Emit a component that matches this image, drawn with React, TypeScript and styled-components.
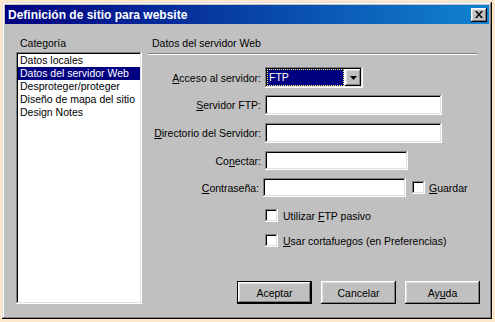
import styled, { createGlobalStyle, css } from "styled-components";

const GlobalStyle = createGlobalStyle`
  html, body {
    margin: 0;
    padding: 0;
    background: #fde8cb;
  }
  body {
    font-family: "Liberation Sans", Arial, sans-serif;
    font-size: 10.5px;
    color: #000;
  }
`;

const raised = css`
  box-shadow: inset -1px -1px #000, inset 1px 1px #fff, inset -2px -2px #808080,
    inset 2px 2px #dfdfdf;
`;

const sunken = css`
  box-shadow: inset -1px -1px #fff, inset 1px 1px #808080, inset -2px -2px #dfdfdf,
    inset 2px 2px #000;
`;

const Page = styled.div`
  padding: 2px;
`;

const Window = styled.div`
  width: 490px;
  height: 317px;
  box-sizing: border-box;
  padding: 3px;
  background: #c0c0c0;
  display: flex;
  flex-direction: column;
  box-shadow: inset -1px -1px #000, inset 1px 1px #dfdfdf, inset -2px -2px #808080,
    inset 2px 2px #fff;
`;

const TitleBar = styled.div`
  height: 19px;
  display: flex;
  align-items: center;
  justify-content: space-between;
  padding: 0 2px 0 3px;
  background: linear-gradient(to right, #000080, #1084d0);
  color: #fff;
  font-weight: bold;
  font-size: 12px;
`;

const CloseButton = styled.div`
  width: 16px;
  height: 14px;
  background: #c0c0c0;
  display: flex;
  align-items: center;
  justify-content: center;
  ${raised};
`;

const Body = styled.div`
  flex: 1;
  display: flex;
  padding: 13px 9px 12px 11px;
  min-height: 0;
`;

const LeftColumn = styled.div`
  width: 126px;
  margin-right: 6px;
  display: flex;
  flex-direction: column;
`;

const Caption = styled.div`
  line-height: 13px;
  height: 13px;
  padding-left: 4px;
`;

const ListBox = styled.div`
  flex: 1;
  margin-top: 2px;
  background: #fff;
  padding: 2px;
  ${sunken};
`;

const ListItem = styled.div<{ selected?: boolean }>`
  line-height: 13px;
  height: 13px;
  padding-left: 2px;
  white-space: nowrap;
  background: ${({ selected }) => (selected ? "#000080" : "transparent")};
  color: ${({ selected }) => (selected ? "#fff" : "#000")};
`;

const RightPanel = styled.div`
  flex: 1;
  display: flex;
  flex-direction: column;
`;

const Separator = styled.div`
  margin: 3px 3px 0 0;
  border-top: 1px solid #808080;
  border-bottom: 1px solid #fff;
`;

const Form = styled.div`
  display: flex;
  flex-direction: column;
  margin-top: 12px;
`;

const Row = styled.div<{ mt: number; h: number }>`
  display: flex;
  align-items: center;
  margin-top: ${({ mt }) => mt}px;
  height: ${({ h }) => h}px;
`;

const Label = styled.label<{ w?: number }>`
  width: ${({ w }) => w ?? 113}px;
  margin-right: 4px;
  text-align: right;
  white-space: nowrap;
`;

const Key = styled.span`
  text-decoration: underline;
`;

const TextField = styled.div<{ w: number }>`
  width: ${({ w }) => w}px;
  height: 100%;
  background: #fff;
  ${sunken};
`;

const Select = styled.div`
  width: 98px;
  height: 100%;
  box-sizing: border-box;
  padding: 2px;
  display: flex;
  background: #fff;
  ${sunken};
`;

const SelectValue = styled.div`
  flex: 1;
  margin-right: 1px;
  background: #000080;
  color: #fff;
  border: 1px dotted #ffff80;
  line-height: 15px;
  padding-left: 1px;
`;

const DropButton = styled.div`
  width: 16px;
  background: #c0c0c0;
  display: flex;
  align-items: center;
  justify-content: center;
  ${raised};
`;

const CheckBox = styled.div`
  width: 13px;
  height: 13px;
  flex: none;
  background: #fff;
  ${sunken};
`;

const CheckText = styled.span<{ ml: number }>`
  margin-left: ${({ ml }) => ml}px;
  white-space: nowrap;
`;

const Spacer = styled.div<{ w: number }>`
  width: ${({ w }) => w}px;
  flex: none;
`;

const ButtonRow = styled.div`
  margin-top: auto;
  display: flex;
  justify-content: flex-end;
  gap: 9px;
`;

const Button = styled.button<{ isDefault?: boolean }>`
  width: 75px;
  height: 23px;
  border: none;
  padding: 0;
  background: #c0c0c0;
  font-family: inherit;
  font-size: 10.5px;
  color: #000;
  ${({ isDefault }) =>
    isDefault
      ? css`
          box-shadow: inset 0 0 0 1px #000, inset -2px -2px #000, inset 2px 2px #fff,
            inset -3px -3px #808080, inset 3px 3px #dfdfdf;
        `
      : raised};
`;

const CloseIcon = () => (
  <svg width="8" height="7" viewBox="0 0 8 7">
    <path d="M0 0h2l2 2.5L6 0h2L5 3.5 8 7H6L4 4.5 2 7H0l3-3.5z" fill="#000" />
  </svg>
);

const ArrowIcon = () => (
  <svg width="7" height="4" viewBox="0 0 7 4">
    <path d="M0 0h7L3.5 4z" fill="#000" />
  </svg>
);

const categories = [
  "Datos locales",
  "Datos del servidor Web",
  "Desproteger/proteger",
  "Diseño de mapa del sitio",
  "Design Notes",
];

export default function App() {
  return (
    <>
      <GlobalStyle />
      <Page>
        <Window>
          <TitleBar>
            <span>Definición de sitio para website</span>
            <CloseButton>
              <CloseIcon />
            </CloseButton>
          </TitleBar>
          <Body>
            <LeftColumn>
              <Caption>Categoría</Caption>
              <ListBox>
                {categories.map((c) => (
                  <ListItem key={c} selected={c === "Datos del servidor Web"}>
                    {c}
                  </ListItem>
                ))}
              </ListBox>
            </LeftColumn>
            <RightPanel>
              <Caption>Datos del servidor Web</Caption>
              <Separator />
              <Form>
                <Row mt={0} h={21}>
                  <Label>
                    <Key>A</Key>cceso al servidor:
                  </Label>
                  <Select>
                    <SelectValue>FTP</SelectValue>
                    <DropButton>
                      <ArrowIcon />
                    </DropButton>
                  </Select>
                </Row>
                <Row mt={7} h={20}>
                  <Label>
                    <Key>S</Key>ervidor FTP:
                  </Label>
                  <TextField w={177} />
                </Row>
                <Row mt={8} h={20}>
                  <Label>
                    <Key>D</Key>irectorio del Servidor:
                  </Label>
                  <TextField w={177} />
                </Row>
                <Row mt={8} h={19}>
                  <Label>
                    Co<Key>n</Key>ectar:
                  </Label>
                  <TextField w={143} />
                </Row>
                <Row mt={8} h={19}>
                  <Label w={111}>
                    <Key>C</Key>ontraseña:
                  </Label>
                  <TextField w={143} />
                  <Spacer w={6} />
                  <CheckBox />
                  <CheckText ml={4}>
                    <Key>G</Key>uardar
                  </CheckText>
                </Row>
                <Row mt={12} h={13}>
                  <Spacer w={117} />
                  <CheckBox />
                  <CheckText ml={5}>
                    Utilizar <Key>F</Key>TP pasivo
                  </CheckText>
                </Row>
                <Row mt={12} h={13}>
                  <Spacer w={117} />
                  <CheckBox />
                  <CheckText ml={5}>
                    <Key>U</Key>sar cortafuegos (en Preferencias)
                  </CheckText>
                </Row>
              </Form>
              <ButtonRow>
                <Button isDefault>Aceptar</Button>
                <Button>Cancelar</Button>
                <Button>
                  Ay<Key>u</Key>da
                </Button>
              </ButtonRow>
            </RightPanel>
          </Body>
        </Window>
      </Page>
    </>
  );
}
